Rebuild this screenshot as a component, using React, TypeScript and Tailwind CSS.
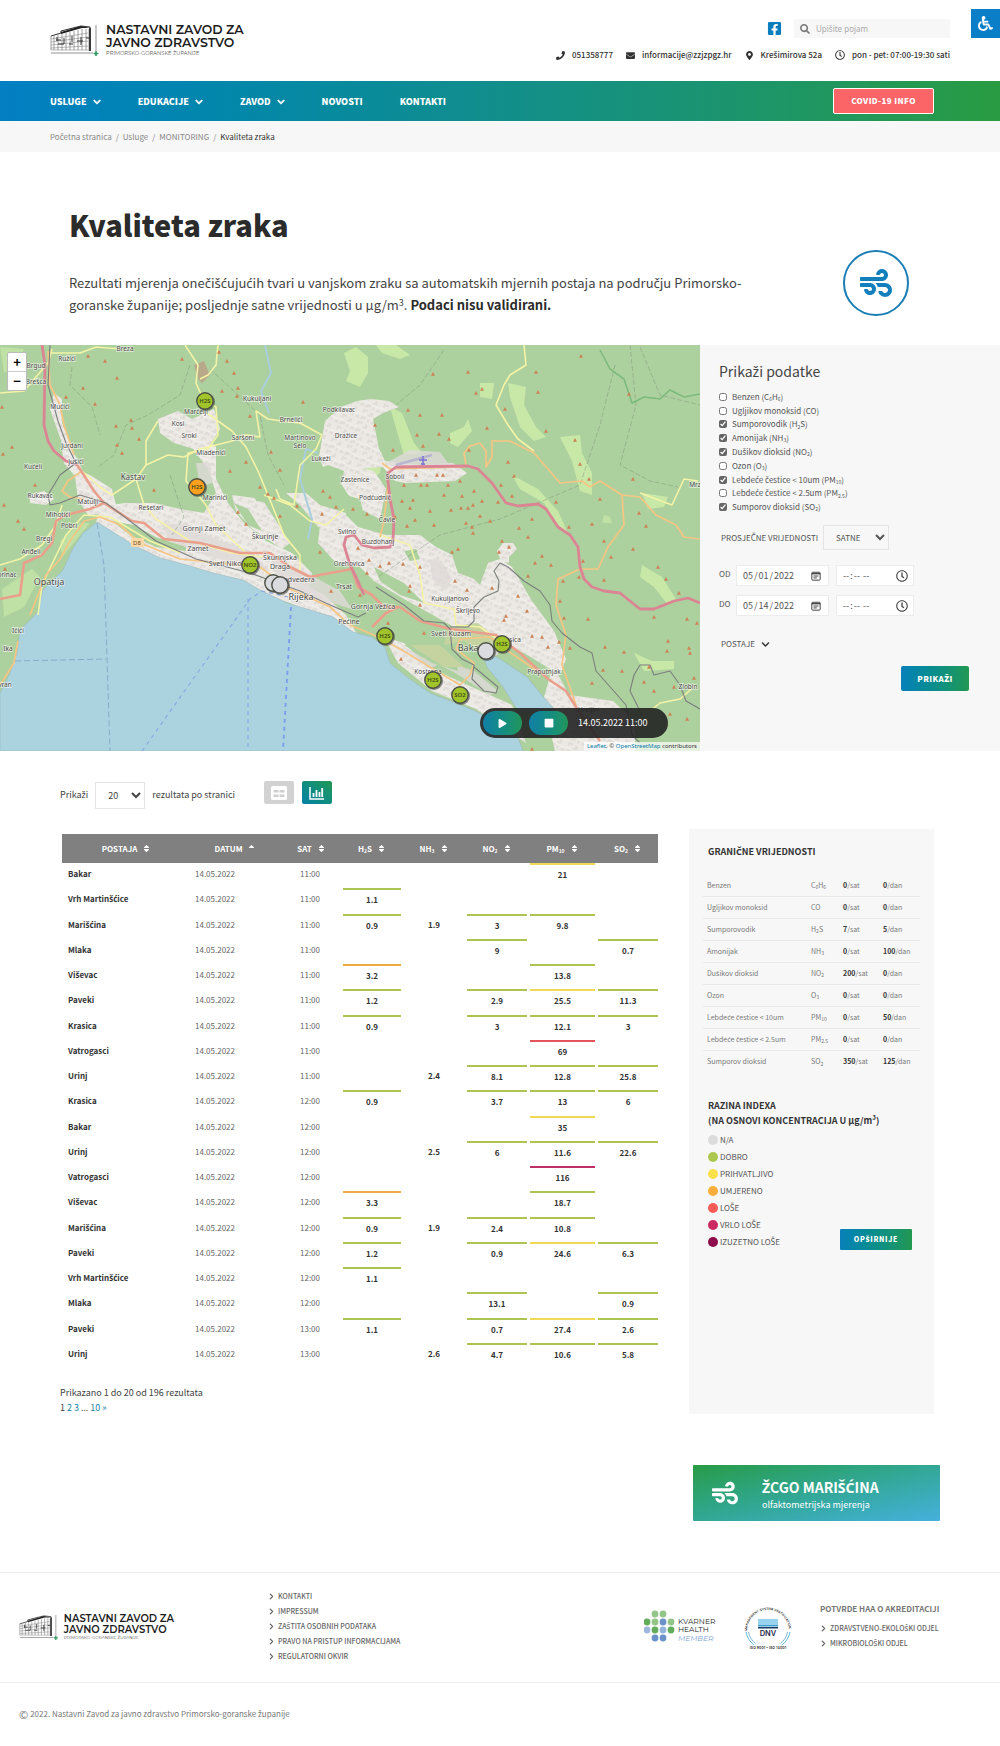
import { useState } from 'react';
import type { ReactNode } from 'react';
import { FaEnvelope, FaFacebookSquare, FaMapMarkerAlt, FaPhone, FaPlay, FaRegClock, FaSearch, FaSort, FaSortUp, FaStop, FaWheelchair, FaWind, FaChevronDown, FaChevronRight } from 'react-icons/fa';

type Level = 'good' | 'fair' | 'moderate' | 'poor' | 'veryPoor';
type Reading = [number, Level] | null;

interface Row {
  station: string;
  hour: string;
  h2s: Reading;
  nh3: number | null;
  no2: Reading;
  pm10: Reading;
  so2: Reading;
}

const levelBorder: Record<Level, string> = {
  good: 'border-[#adc452]',
  fair: 'border-[#f0d957]',
  moderate: 'border-[#f0ab44]',
  poor: 'border-[#e2555a]',
  veryPoor: 'border-[#c02e66]',
};

const g = (n: number): Reading => [n, 'good'];
const f = (n: number): Reading => [n, 'fair'];
const m = (n: number): Reading => [n, 'moderate'];

const rows: Row[] = [
  { station: 'Bakar', hour: '11:00', h2s: null, nh3: null, no2: null, pm10: f(21), so2: null },
  { station: 'Vrh Martinšćice', hour: '11:00', h2s: g(1.1), nh3: null, no2: null, pm10: null, so2: null },
  { station: 'Marišćina', hour: '11:00', h2s: g(0.9), nh3: 1.9, no2: g(3), pm10: g(9.8), so2: null },
  { station: 'Mlaka', hour: '11:00', h2s: null, nh3: null, no2: g(9), pm10: null, so2: g(0.7) },
  { station: 'Viševac', hour: '11:00', h2s: m(3.2), nh3: null, no2: null, pm10: g(13.8), so2: null },
  { station: 'Paveki', hour: '11:00', h2s: g(1.2), nh3: null, no2: g(2.9), pm10: f(25.5), so2: g(11.3) },
  { station: 'Krasica', hour: '11:00', h2s: g(0.9), nh3: null, no2: g(3), pm10: g(12.1), so2: g(3) },
  { station: 'Vatrogasci', hour: '11:00', h2s: null, nh3: null, no2: null, pm10: [69, 'poor'], so2: null },
  { station: 'Urinj', hour: '11:00', h2s: null, nh3: 2.4, no2: g(8.1), pm10: g(12.8), so2: g(25.8) },
  { station: 'Krasica', hour: '12:00', h2s: g(0.9), nh3: null, no2: g(3.7), pm10: g(13), so2: g(6) },
  { station: 'Bakar', hour: '12:00', h2s: null, nh3: null, no2: null, pm10: f(35), so2: null },
  { station: 'Urinj', hour: '12:00', h2s: null, nh3: 2.5, no2: g(6), pm10: g(11.6), so2: g(22.6) },
  { station: 'Vatrogasci', hour: '12:00', h2s: null, nh3: null, no2: null, pm10: [116, 'veryPoor'], so2: null },
  { station: 'Viševac', hour: '12:00', h2s: m(3.3), nh3: null, no2: null, pm10: g(18.7), so2: null },
  { station: 'Marišćina', hour: '12:00', h2s: g(0.9), nh3: 1.9, no2: g(2.4), pm10: g(10.8), so2: null },
  { station: 'Paveki', hour: '12:00', h2s: g(1.2), nh3: null, no2: g(0.9), pm10: f(24.6), so2: g(6.3) },
  { station: 'Vrh Martinšćice', hour: '12:00', h2s: g(1.1), nh3: null, no2: null, pm10: null, so2: null },
  { station: 'Mlaka', hour: '12:00', h2s: null, nh3: null, no2: g(13.1), pm10: null, so2: g(0.9) },
  { station: 'Paveki', hour: '13:00', h2s: g(1.1), nh3: null, no2: g(0.7), pm10: f(27.4), so2: g(2.6) },
  { station: 'Urinj', hour: '13:00', h2s: null, nh3: 2.6, no2: g(4.7), pm10: g(10.6), so2: g(5.8) },
];

// The main font has no Croatian letters, so those come from Noto Sans.
// Digits after "_" are drawn as subscript.
function Hr({ text }: { text: string }) {
  const parts = text.split(/(_[\d.]+|[čćšžđČĆŠŽĐ…]+)/);
  return (
    <span>
      {parts.map((p, i) => {
        if (i % 2 === 0) return p;
        if (p[0] === '_') return <sub key={i} className="text-[5px]">{p.slice(1)}</sub>;
        return <span key={i} className="font-['Noto_Sans',sans-serif]">{p}</span>;
      })}
    </span>
  );
}

const pollutants = [
  { name: 'Benzen', formula: 'C_6H_6', on: false, hour: 0, day: 0 },
  { name: 'Ugljikov monoksid', formula: 'CO', on: false, hour: 0, day: 0 },
  { name: 'Sumporovodik', formula: 'H_2S', on: true, hour: 7, day: 5 },
  { name: 'Amonijak', formula: 'NH_3', on: true, hour: 0, day: 100 },
  { name: 'Dušikov dioksid', formula: 'NO_2', on: true, hour: 200, day: 0 },
  { name: 'Ozon', formula: 'O_3', on: false, hour: 0, day: 0 },
  { name: 'Lebdeće čestice < 10um', formula: 'PM_10', on: true, hour: 0, day: 50 },
  { name: 'Lebdeće čestice < 2.5um', formula: 'PM_2.5', on: false, hour: 0, day: 0 },
  { name: 'Sumporov dioksid', formula: 'SO_2', on: true, hour: 350, day: 125 },
];

const indexLevels = [
  ['N/A', 'bg-[#dcdcdc]'],
  ['DOBRO', 'bg-[#adc84f]'],
  ['PRIHVATLJIVO', 'bg-[#fbe04a]'],
  ['UMJERENO', 'bg-[#f9ad3a]'],
  ['LOŠE', 'bg-[#f75b57]'],
  ['VRLO LOŠE', 'bg-[#cb2a63]'],
  ['IZUZETNO LOŠE', 'bg-[#8d0e4b]'],
];

function Logo({ className }: { className: string }) {
  return (
    <svg viewBox="0 0 196 33" className={className} role="img" aria-label="Nastavni zavod za javno zdravstvo">
      <path d="M1 12 L11 9 L11 7 L31 2 L40 3 L40 27" fill="none" stroke="#333" strokeWidth="1" />
      <path d="M11 8 L31 2 L40 4 L32 4 L11 10Z" fill="#222" />
      <path d="M1 12V26M4 11V26M8 10V26M12 10V26M16 9V26M20 8V26M24 7V26M28 6V26M32 5V26M36 5V26M39 5V26" stroke="#777" strokeWidth=".7" />
      <path d="M1 15L38 9M1 18L38 13M1 21L38 17M1 24L38 22M1 26H41" stroke="#888" strokeWidth=".6" />
      <path d="M6 16h5M8 20h6M14 14v6M22 12v6M27 17h6M31 13v8M19 20h4M36 14h3M7 13v4" stroke="#333" strokeWidth="1" />
      <path d="M40 4v23" stroke="#222" strokeWidth="1.6" />
      <path d="M46 1V27M1 29H43" stroke="#777" strokeWidth=".8" />
      <path d="M46 27v5M43.5 29.5h5" stroke="#2c9a5e" strokeWidth="1.6" />
      <text x="56" y="10" fontSize="12.5" fontWeight="600" fill="#1c1c1c" fontFamily="Montserrat, Inter, sans-serif">NASTAVNI ZAVOD ZA</text>
      <text x="56" y="23" fontSize="12.5" fontWeight="600" fill="#1c1c1c" fontFamily="Montserrat, Inter, sans-serif">JAVNO ZDRAVSTVO</text>
      <text x="56" y="31" fontSize="5.2" fill="#555" fontFamily="Montserrat, Inter, sans-serif">PRIMORSKO-GORANSKE ŽUPANIJE</text>
    </svg>
  );
}

const mapLabels: [number, number, string, number?][] = [
  [125, 6, 'Breza'], [67, 16, 'Ružići'], [36, 23, 'Brgud'], [36, 39, 'Brešca'], [60, 64, 'Mučići'], [72, 103, 'Jurdani'],
  [76, 119, 'Jušići'], [33, 124, 'Kućeli'], [133, 135, 'Kastav', 8], [40, 153, 'Rukavac'], [88, 159, 'Matulji'], [58, 172, 'Mihotići'],
  [69, 183, 'Pobri'], [44, 196, 'Bregi'], [31, 209, 'Anđeli'], [7, 232, 'orinac'], [49, 240, 'Opatija', 9], [18, 288, 'Ičići'],
  [8, 306, 'Ika'], [5, 342, 'vran'], [151, 165, 'Rešetari'], [196, 69, 'Marčelji'], [178, 81, 'Kosi'], [189, 93, 'Sroki'],
  [211, 110, 'Mladenići'], [243, 95, 'Saršoni'], [257, 56, 'Kukuljani'], [291, 77, 'Brnelići'], [300, 95, 'Martinovo'], [300, 103, 'Selo'],
  [339, 67, 'Podkilavac'], [346, 93, 'Dražice'], [321, 116, 'Lukeži'], [355, 137, 'Zastenice'], [215, 155, 'Marinići'],
  [204, 186, 'Gornji Zamet', 7], [265, 194, 'Škurinje', 7], [198, 206, 'Zamet', 7], [280, 215, 'Škurinjska', 7], [280, 224, 'Draga', 7],
  [228, 221, 'Sveti Nikola', 7], [297, 237, 'Podvedera', 7], [301, 255, 'Rijeka', 9], [344, 244, 'Trsat', 7], [349, 221, 'Orehovica'],
  [347, 189, 'Svilno'], [395, 134, 'Soboli'], [375, 155, 'Podčudnič'], [387, 177, 'Čavle'], [378, 199, 'Buzdohanj'],
  [373, 264, 'Gornja Vežica', 7], [349, 279, 'Pećine', 7], [450, 256, 'Kukuljanovo'], [468, 268, 'Škrljevo'], [451, 291, 'Sveti Kuzam', 7],
  [470, 306, 'Bakar', 9], [510, 297, 'Krasica'], [544, 329, 'Praputnjak'], [428, 329, 'Kostrena'], [688, 344, 'Zlobin'],
  [695, 142, 'Mrz'], [588, 367, 'Hreljin'],
];

// [x, y] of the mountain peak symbols
const peaks: [number, number][] = [
  [88, 11], [105, 16], [83, 43], [117, 33], [66, 52], [95, 59], [131, 75], [116, 81], [132, 83], [139, 94], [117, 100], [122, 108],
  [12, 102], [3, 109], [35, 140], [4, 160], [18, 176], [24, 184], [154, 145], [2, 62], [5, 224], [182, 14], [219, 7], [227, 16],
  [234, 28], [238, 43], [222, 46], [237, 51], [250, 71], [303, 57], [230, 126], [246, 117], [271, 107], [280, 125], [268, 149],
  [274, 153], [260, 142], [238, 167], [246, 179], [280, 171], [297, 161], [323, 146], [330, 152], [336, 162], [322, 169], [320, 207],
  [353, 164], [367, 169], [375, 80], [408, 65], [420, 70], [442, 70], [417, 90], [439, 89], [449, 94], [423, 101], [393, 105],
  [469, 105], [433, 29], [468, 27], [476, 48], [482, 44], [536, 27], [538, 47], [581, 11], [505, 64], [487, 83], [546, 86],
  [575, 95], [629, 49], [508, 117], [580, 119], [589, 134], [633, 134], [514, 131], [501, 140], [512, 151], [498, 157], [556, 157],
  [600, 154], [639, 168], [646, 181], [569, 182], [592, 179], [604, 196], [611, 212], [633, 204], [658, 222], [583, 216], [666, 234],
  [679, 248], [604, 235], [579, 232], [563, 236], [528, 231], [551, 220], [542, 211], [535, 218], [509, 202], [499, 207], [502, 196],
  [519, 183], [528, 192], [532, 174], [480, 171], [490, 176], [466, 178], [473, 188], [472, 182], [434, 180], [415, 175], [407, 181],
  [410, 163], [430, 166], [444, 150], [462, 151], [474, 146], [461, 163], [468, 163], [473, 160], [482, 156], [451, 165], [404, 140],
  [416, 130], [421, 140], [427, 140], [437, 130], [448, 140], [460, 136], [443, 130], [413, 155], [402, 156], [395, 172], [452, 207],
  [458, 204], [455, 236], [467, 245], [492, 243], [506, 271], [504, 275], [518, 251], [527, 266], [560, 256], [564, 273], [588, 274],
  [542, 292], [532, 291], [548, 302], [559, 297], [570, 303], [605, 302], [624, 307], [622, 326], [603, 325], [592, 338], [649, 322],
  [668, 296], [667, 306], [689, 303], [690, 308], [654, 272], [687, 274], [697, 278], [644, 337], [654, 346], [670, 369], [687, 374],
  [694, 333], [674, 342], [410, 241], [420, 260], [409, 246], [389, 218], [380, 221], [403, 219], [420, 222], [369, 215], [358, 203],
  [360, 250], [401, 314], [424, 288], [388, 278], [367, 228], [331, 246], [532, 404],
];

const markers: [number, number, string, string][] = [
  [205, 56, 'H2S', '#a2c42b'], [197, 142, 'H2S', '#fb9f1c'], [250, 220, 'NO2', '#a2c42b'], [273, 238, '', '#d9dbdf'],
  [280, 240, '', '#d9dbdf'], [385, 291, 'H2S', '#a2c42b'], [502, 299, 'H2S', '#a2c42b'], [486, 306, '', '#d9dbdf'],
  [433, 335, 'H2S', '#a2c42b'], [460, 350, 'SO2', '#a2c42b'],
];

// Outlines of the settlements, filled once plain and once with the house pattern
const builtUp = [
  'M158 74l20-8 14 8 22-10 6 20-10 16-16 4-20-6-14-10zM190 100l16-6 10 8 0 32 12 24 16 20 22 18 26 12 20 20-6 30-40-16-32-22-24-16-36-6-30-16-24-10-18-10 22-4 30 0 26 6 24 4 12-20-8-24zM325 76l16-14 16-6 14-2 18 2 10 6-16 6-10 6 6 30 6 12 36 4 32-2 14 10-12 8-50 2-10-2-12-14-32 2-24 8-8-20z',
  'M320 180l24-12 14 14 28 8 22 0 18 8 22 26 26 10 24 24 24 6-4 30-60-10-54-30-30-18-14-14-24-4-18-20zM400 190l20 0 16 12 16 8 6 18 8 10-8 16-36-8-22-30zM480 240l8-22 12-4 12 8 20 34 22 30 12 28 -6 16-36-22-30-14-8-24zM497 206l6-8 10 0 4 6-8 8 0 6-8-2z',
  'M100 164l44 6 30 22 60 16 40 14 50 28 22 20 14 24-30-16-40-20-26-8-60-22-50-14-30-14-30-16zM384 292l20 6 24 24 44 20 40 18 14 38-50-34-44-18-34-28zM553 320l16 30 44 6 22 20 0 30-80 0-12-50zM54 48l8 6 0 24 12 30-10-4-14-40zM62 104l12 4 8 16-8 6-10-12zM30 150l14-4 10 8-8 6-16-2z',
  'M286 148l20 0 14 12 26 8 0 10-28 4-18-22zM232 150l30 4 28 44-8 6-30-20-16-18zM74 124l16 6 22 14 6 24-30 2-10-16zM330 130l28-8 16 4 12 18-6 30-24-12-14-22z',
];

function StationMap() {
  return (
    <svg viewBox="0 0 700 406" preserveAspectRatio="xMidYMid slice" className="block h-full w-full" role="img" aria-label="Karta mjernih postaja">
      <defs>
        <pattern id="houses" width="17" height="13" patternUnits="userSpaceOnUse" patternTransform="rotate(24)">
          <path d="M1 1h5v2h-3v2h-2zM9 2h3v4h-2v1h-3v-2h2zM14 9h3v3h-4zM3 8h4v3h-3v1h-3zM9 9h2v3h-2z" fill="#d2cecb" />
          <path d="M0 7h8l4 1h5" fill="none" stroke="#ffffff" strokeWidth=".8" />
        </pattern>
      </defs>
      <rect width="700" height="406" fill="#add19e" />
      {/* meadows */}
      <g fill="#c8e8a8">
        <path d="M344 8l12-6 12 10 0 16-8 14-14-6 4-10zM352 108l18-8 12 8-2 20-8 6-18-4-4-12zM390 62l12 6 12 30 8 10-18 2-6-20zM508 38l18 4-2 18 12 22 10 10-12 4-14-14-10-30zM450 88l14-6 4-8 4 12-14 16-8-4zM560 92l20-2 2 18 10 20 0 22-12 -4-8-30zM512 130l26 14 20 22 10 22-10-6-14-24-24-14zM642 220l20 12 14 22-8 6-14-18-14-10zM480 38l14 0-2 16-12-2zM642 148l26 4-4 10-16 2zM634 308l18 8 22 0 0 8-30 2zM376 0l20 0 14 10-10 4-18-6z" />
        <path d="M0 2l24 2-6 16-14 8zM2 244l30-20 8 8-16 30-20 10zM60 196l20-18 10 0-28 34zM604 170l6 2 2 6-10 0z" opacity=".7" />
      </g>
      {/* built-up land */}
      {builtUp.map((d) => (
        <g key={d}>
          <path d={d} fill="#ece9e4" />
          <path d={d} fill="url(#houses)" opacity=".45" />
        </g>
      ))}
      <g fill="#dedad8">
        <path d="M160 178l30 2 20 12 40 14 20 20-60-14-40-16zM196 118l14 0 2 20-12 4zM270 210l30 14 40 22 12 18-40-12-36-22zM430 214l12 2 10 18-6 12-14-12zM410 105l30 2 10 14-60 0-2-4zM398 298l24 14 30 14 38 24 8-4-24-20-30-10 -14 8-20-16zM484 302l14 2 0 6-12 2z" opacity=".8" />
      </g>
      <g fill="#add19e">
        <path d="M234 158l14 6 14 22-14-6zM250 140l14 6 6 12-14-2zM304 130l24-10 16 6-2 12-24 4zM374 222l30 16 20 20-24-8-20-14zM404 300l22 0 30 14 2 12-26-8zM404 206l12-2 4 10-10 2zM380 266l26 10 26 18-20-4-26-16zM346 150l14 4 4 16-12-2zM112 176l22 4 22 12 30 10 0 4-30-4-26-12zM270 154l20 10 10 26-14-10z" />
      </g>
      <path d="M448 282l30-4 18 16-8 16-24-14-20 4zM410 300l30 0 24 22-20 0z" fill="#c5d3a0" />
      {/* sea */}
      <path d="M0 348L10 328L17 308L20 285L37 268L43 245L63 225L72 205L83 188L97 177L110 185L133 200L160 213L187 220L213 228L243 235L260 245L287 258L310 265L333 272L353 287L372 292L385 302L390 318L407 332L430 348L473 365L500 378L517 390L523 406H0Z" fill="#aad3df" stroke="#9db7bd" strokeWidth=".6" />
      <path d="M483 310L497 312L527 332L540 348L556 366L518 366L503 342L487 322Z" fill="#aad3df" stroke="#9db7bd" strokeWidth=".6" />
      <path d="M265 0l6 28-10 18 8 22M306 104l-6 30 12 40-4 20M318 108l-12-4" fill="none" stroke="#a9cedd" strokeWidth="2" />
      <path d="M194 20l10-4 6 14-8 8-4-4z" fill="#b8a98a" />
      {/* borders and paths */}
      <g fill="none" stroke="#879a80" strokeWidth=".7" strokeDasharray="5 2" opacity=".8">
        <path d="M190 20L180 50L148 70L126 80L114 110L98 122M72 22L70 40L92 62L100 90M170 130L184 172L172 190M210 24L260 70L268 110L284 140M444 5L420 40L396 60M615 20L600 80L580 140L500 174L440 190L378 232M630 0L636 60L620 120L650 136L678 142M640 2L660 50L700 60" />
      </g>
      <path d="M600 5L610 24L624 34L632 58L644 52L660 54L670 45L684 52L700 49" fill="none" stroke="#7cba7c" strokeWidth="1.6" />
      {/* minor roads */}
      <g fill="none" stroke="#f4f3a6" strokeWidth="1.6" strokeLinejoin="round">
        <path d="M0 48L24 46L48 18L52 4M50 8L80 8L96 2L120 4M185 0L198 20L196 38L204 56L216 62L218 90L208 104L188 108L186 136L206 160L216 180L244 206L252 214M218 0L216 20L208 30L200 34M204 66L232 86L246 102L258 126L268 150L284 190L300 210L300 228" />
        <path d="M158 76L146 96L146 120L136 134L112 150L100 142L82 126M146 120L168 110L184 112L200 104L232 96L246 90L260 92L256 66L268 74L282 76L300 78L322 90L316 104L300 120L294 160L280 154L276 144M264 150L290 160L310 176L326 180L344 164M136 134L144 160L156 174L190 196L232 208L262 212M524 0L526 20L510 30L504 40L496 60L508 80L518 94L534 106M380 190L410 200L420 230L424 258L454 264L456 280L480 282L500 296" />
        <path d="M640 148L656 154L672 160L684 134L698 136M650 366L660 358L680 354L696 340M0 220L20 214L42 200L56 180L62 160M38 270L42 240L66 190L84 170L110 172L150 196L180 208" />
      </g>
      {/* main roads */}
      <g fill="none" stroke="#f6c583" strokeWidth="1.7" strokeLinejoin="round">
        <path d="M48 6L50 40L60 60L64 80L74 110M82 126L68 136L62 146L70 152L84 154M0 340L14 318L18 296M30 270L46 230L60 214L70 196L84 176L100 172L120 180L140 198L180 214L220 218L260 222L290 244L330 262L350 280L374 290L400 304L430 322L460 340L470 330L474 318L456 304L460 294L490 292L508 306L540 328" />
        <path d="M466 120L464 108L470 101L480 98L486 106L486 122L492 112L492 96L510 96L534 108L548 124L560 138L582 136L590 142L600 136L622 150L640 152L656 170L676 180L684 192L700 194M622 150L624 180L608 202L598 224L580 224M580 224L558 234L556 260L566 290L562 320L576 360M382 118L390 124L466 122M388 140L384 176L380 192" />
      </g>
      <g fill="none" stroke="#e99f8b" strokeWidth="2.6" strokeLinejoin="round">
        <path d="M76 118L94 146L104 158L132 176L144 178L164 194L200 198L240 208L270 208L290 222L310 232L330 228L352 224L358 242L372 250L384 262L400 262L420 276L450 284L466 286L496 290L520 308L548 334L566 346L576 362L600 396M104 158L90 164L66 170L56 176L52 198L42 210L24 218L20 250L0 254M372 282L386 268L398 262" />
      </g>
      {/* motorway */}
      <g fill="none" stroke="#da8494" strokeWidth="2.8" strokeLinejoin="round">
        <path d="M42 0L45 20L44 80L48 96L54 106L66 116L78 120M364 250L356 232L350 220L344 200L346 192L354 190L362 200L374 203L390 202L393 196L394 174L390 154L388 136L388 128L396 122L468 121L478 124L492 138L506 158L518 161L538 159L546 164L558 182L570 190L578 202L580 222L584 234L592 242L604 246L620 248L630 256L640 264L654 264L674 256L688 253L700 258" />
      </g>
      {/* railway */}
      <g fill="none" stroke="#7b7e7e" strokeWidth="1.1" strokeLinejoin="round">
        <path d="M50 0L48 40L58 76L66 98L76 118L60 130L48 150L50 160L60 158L80 150L106 158L130 176L156 196L196 214L250 228L300 246L330 260L358 272L366 268M376 242L404 260L424 276L444 278L450 284L452 304L462 314L474 320L472 334L484 346L496 348L498 342L474 322M450 282L468 282L474 276L474 262L484 252L498 246L499 236L494 226L500 218L508 222L524 236L540 246L550 260L552 276L562 288L580 302L592 308L596 326L612 344L626 360L632 390L640 398M642 370L630 346L634 330L640 320L650 320L654 330L670 326L680 340L686 356L700 364" />
      </g>
      {/* administrative and ferry lines */}
      <g fill="none" stroke="#83a7c4" strokeWidth=".9" strokeDasharray="6 3">
        <path d="M97 178L104 220L110 406M15 316L106 314" />
      </g>
      <g fill="none" stroke="#8aa6e4" strokeWidth="1.1" strokeDasharray="4 4">
        <path d="M142 406L250 254L262 246L288 252M248 254L248 406" />
        <path d="M291 262L283 406" stroke="#7a9df0" strokeWidth="1.8" />
      </g>
      <path d="M396 120L432 110" stroke="#b8b6cf" strokeWidth="2.5" />
      <path d="M423 111v9M419 115h8M421 119h4" stroke="#7a6fd6" strokeWidth="1.4" />
      <g fill="#cd8355">
        {peaks.map(([x, y]) => (
          <path key={`${x}-${y}`} d={`M${x} ${y - 2}l2 3.700h-4z`} />
        ))}
      </g>
      <rect x="131" y="193" width="13" height="9" rx="1" fill="#fbd9a6" />
      <text x="137" y="200" fontSize="6" textAnchor="middle" fill="#6d4a1e" fontFamily="Noto Sans, sans-serif">D8</text>
      <g fill="#4a4845" stroke="#ffffff" strokeOpacity=".6" strokeWidth="1.4" paintOrder="stroke" fontFamily="Noto Sans, sans-serif" textAnchor="middle">
        {mapLabels.map(([x, y, name, size]) => (
          <text key={name} x={x} y={y} fontSize={size ?? 6.5}>{name}</text>
        ))}
      </g>
      {markers.map(([x, y, label, fill]) => (
        <g key={`${x}-${y}`}>
          <circle cx={x + 1} cy={y + 1} r="9" fill="#444" opacity=".6" />
          <circle cx={x} cy={y} r="8.2" fill={fill} stroke="#4a4f45" strokeWidth="1.4" />
          <text x={x} y={y + 2} fontSize="6" fontWeight="600" textAnchor="middle" fill="#3c4a14" fontFamily="Noto Sans, sans-serif">{label}</text>
        </g>
      ))}
    </svg>
  );
}

function CalendarIcon() {
  return (
    <svg viewBox="0 0 12 12" className="size-[10px] shrink-0" fill="none" stroke="#444" strokeWidth="1.2">
      <rect x="1" y="1.5" width="10" height="9.5" rx="1" />
      <path d="M1 3.2h10" strokeWidth="1.6" />
      <path d="M3 6h6M3 8.3h4" />
    </svg>
  );
}

function DateTimeRow({ label, id, date }: { label: string; id: string; date: string }) {
  return (
    <div className="flex items-center gap-[7px]">
      <label htmlFor={`${id}-date`} className="w-[10px] pb-1 text-[8px]">{label}</label>
      <div className="flex h-[21px] w-[93px] items-center justify-between border border-[#ececec] bg-white pr-[7px] pl-[5px]">
        <input id={`${id}-date`} type="date" defaultValue={date} className="w-[66px] text-[9px] outline-none [&::-webkit-calendar-picker-indicator]:hidden" />
        <CalendarIcon />
      </div>
      <div className="flex h-[21px] w-[78px] items-center justify-between border border-[#ececec] bg-white pr-[5px] pl-[5px]">
        <input type="time" aria-label={`${label} vrijeme`} className="w-[50px] text-[9px] outline-none [&::-webkit-calendar-picker-indicator]:hidden" />
        <FaRegClock size={12} color="#444" />
      </div>
    </div>
  );
}

function Header() {
  return (
    <header className="relative flex h-[81px] items-start justify-between pr-[50px] pl-[50px]">
      <Logo className="mt-[24px] h-[33px] w-[196px]" />
      <div className="flex flex-col items-end pt-[19px]">
        <div className="flex items-center gap-[12px]">
          <a href="#facebook" aria-label="Facebook"><FaFacebookSquare size={15} color="#0a7dbd" /></a>
          <label className="flex h-[19px] w-[156px] items-center gap-[6px] bg-[#f7f7f7] px-[6px]">
            <FaSearch size={10} color="#777" className="shrink-0" />
            <input aria-label="Upišite pojam" placeholder="Upišite pojam" className="w-full font-['Noto_Sans',sans-serif] text-[8px] outline-none placeholder:text-[#aaa]" />
          </label>
        </div>
        <div className="mt-[9px] flex items-center gap-[13px] text-[8px] leading-4 font-medium text-[#333]">
          <span className="flex items-center gap-[7px]"><FaPhone size={9} />051358777</span>
          <span className="flex items-center gap-[7px]"><FaEnvelope size={9} />informacije@zzjzpgz.hr</span>
          <span className="flex items-center gap-[7px]"><FaMapMarkerAlt size={9} /><Hr text="Krešimirova 52a" /></span>
          <span className="flex items-center gap-[7px]"><FaRegClock size={10} />pon - pet: 07:00-19:30 sati</span>
        </div>
      </div>
      <button aria-label="Pristupačnost" className="absolute top-[9px] right-0 flex h-[29px] w-[29px] items-center justify-center bg-[#0a7fc8] text-white">
        <FaWheelchair size={15} />
      </button>
    </header>
  );
}

function Nav() {
  const items: [string, boolean][] = [['USLUGE', true], ['EDUKACIJE', true], ['ZAVOD', true], ['NOVOSTI', false], ['KONTAKTI', false]];
  return (
    <nav className="flex h-[40px] items-center justify-between bg-linear-to-r from-[#037fc3] via-[#128e8b] to-[#299b41] pr-[66px] pl-[50px]">
      <ul className="flex gap-[37px] pt-[2px] text-[9px] font-black text-white">
        {items.map(([name, sub]) => (
          <li key={name}>
            <a href={`#${name.toLowerCase()}`} className="flex items-center gap-[6px]">
              {name}
              {sub && <FaChevronDown size={8} stroke="currentColor" strokeWidth={40} />}
            </a>
          </li>
        ))}
      </ul>
      <a href="#covid" className="flex h-[26px] w-[101px] items-center justify-center rounded-xs border border-white bg-[#fb6568] text-[8px] font-black tracking-wider text-white">COVID-19 INFO</a>
    </nav>
  );
}

function FilterPanel() {
  return (
    <form className="w-[300px] bg-[#f7f7f7] pt-[16px] pr-[31px] pl-[19px] text-[8px] text-[#555]" onSubmit={(e) => e.preventDefault()}>
      <h2 className="text-[14px] leading-5 text-[#444]"><Hr text="Prikaži podatke" /></h2>
      <div className="mt-[8px] grid h-[124px] auto-rows-fr">
        {pollutants.map((p) => (
          <label key={p.name} className="flex items-center gap-[5px] leading-3">
            <input type="checkbox" defaultChecked={p.on} className="size-[8px] accent-[#666]" />
            <Hr text={`${p.name} (${p.formula})`} />
          </label>
        ))}
      </div>
      <div className="mt-[11px] flex items-center gap-[5px] pl-[2px]">
        <label htmlFor="average"><Hr text="PROSJEČNE VRIJEDNOSTI" /></label>
        <select id="average" className="h-[25px] w-[66px] border border-[#e4e4e4] bg-[#f7f7f7] pl-[8px] text-[8px]">
          <option>SATNE</option>
          <option>DNEVNE</option>
        </select>
      </div>
      <div className="mt-[15px] flex flex-col gap-[9px]">
        <DateTimeRow label="OD" id="od" date="2022-05-01" />
        <DateTimeRow label="DO" id="do" date="2022-05-14" />
      </div>
      <button type="button" className="mt-[20px] flex items-center gap-[6px] pl-[2px] leading-4">
        POSTAJE <FaChevronDown size={9} color="#333" />
      </button>
      <div className="mt-[14px] flex justify-end">
        <button className="h-[25px] w-[68px] rounded-xs bg-linear-to-r from-[#0a80b9] to-[#229851] text-[8px] font-black tracking-wider text-white"><Hr text="PRIKAŽI" /></button>
      </div>
    </form>
  );
}

function MapSection() {
  const [playing, setPlaying] = useState(false);
  return (
    <section className="flex">
      <div className="relative h-[406px] min-w-0 flex-1 overflow-hidden">
        <StationMap />
        <div className="absolute top-[7px] left-[7px] flex w-[20px] flex-col rounded-xs border border-[#bbb] bg-white text-[13px] leading-[18px] font-bold text-black">
          <button aria-label="Približi" className="h-[19px] border-b border-[#ccc]">+</button>
          <button aria-label="Udalji" className="h-[18px]">−</button>
        </div>
        <div className="absolute right-[32px] bottom-[13px] flex h-[30px] w-[188px] items-center gap-[7px] rounded-full bg-[#222]/90 px-[3px] text-white">
          <button aria-label="Pokreni" onClick={() => setPlaying(true)} className="flex h-[24px] w-[39px] items-center justify-center rounded-full bg-linear-to-r from-[#127fa6] to-[#22965a]">
            <FaPlay size={9} opacity={playing ? 0.6 : 1} />
          </button>
          <button aria-label="Zaustavi" onClick={() => setPlaying(false)} className="flex h-[24px] w-[39px] items-center justify-center rounded-full bg-linear-to-r from-[#127fa6] to-[#22965a]">
            <FaStop size={10} />
          </button>
          <span className="pl-[3px] text-[9px]">14.05.2022 11:00</span>
        </div>
        <p className="absolute right-0 bottom-0 bg-white/70 px-[3px] font-['Noto_Sans',sans-serif] text-[6px] leading-[9px] text-[#333]">
          <a href="#leaflet" className="text-[#0b7dab]">Leaflet</a>, © <a href="#osm" className="text-[#0b7dab]">OpenStreetMap</a> contributors
        </p>
      </div>
      <FilterPanel />
    </section>
  );
}

function SortHead({ children, up }: { children: ReactNode; up?: boolean }) {
  return (
    <th className="p-0 pl-[3px] font-bold">
      <button className="mx-auto flex items-center gap-[5px]">
        {children}
        {up ? <FaSortUp size={9} /> : <FaSort size={9} />}
      </button>
    </th>
  );
}

function Cell({ value }: { value: Reading }) {
  if (!value) return <td />;
  return (
    <td className="p-0 pl-[3px] align-top">
      <div className={`border-t-2 pt-[4px] text-center font-bold ${levelBorder[value[1]]}`}>{value[0]}</div>
    </td>
  );
}

function ResultsTable() {
  return (
    <table className="mt-[25px] ml-[2px] h-[534px] w-[596px] table-fixed text-[8px] leading-3 text-[#333]">
      <colgroup>
        <col className="w-[126px]" />
        <col className="w-[92px]" />
        <col className="w-[60px]" />
        <col className="w-[61px]" />
        <col className="w-[63px]" />
        <col className="w-[63px]" />
        <col className="w-[68px]" />
        <col className="w-[63px]" />
      </colgroup>
      <thead>
        <tr className="h-[29px] bg-[#808080] text-white">
          <SortHead>POSTAJA</SortHead>
          <SortHead up>DATUM</SortHead>
          <SortHead>SAT</SortHead>
          <SortHead><Hr text="H_2S" /></SortHead>
          <SortHead><Hr text="NH_3" /></SortHead>
          <SortHead><Hr text="NO_2" /></SortHead>
          <SortHead><Hr text="PM_10" /></SortHead>
          <SortHead><Hr text="SO_2" /></SortHead>
        </tr>
      </thead>
      <tbody>
        {rows.map((r, i) => (
          <tr key={i}>
            <td className="p-0 pb-[3px] pl-[6px] font-bold"><Hr text={r.station} /></td>
            <td className="p-0 pb-[3px] pl-[7px] text-[#666]">14.05.2022</td>
            <td className="p-0 pb-[3px] text-center text-[#666]">{r.hour}</td>
            <Cell value={r.h2s} />
            <td className="p-0 pb-[3px] pl-[3px] text-center font-bold">{r.nh3}</td>
            <Cell value={r.no2} />
            <Cell value={r.pm10} />
            <Cell value={r.so2} />
          </tr>
        ))}
      </tbody>
    </table>
  );
}

function LimitsPanel() {
  return (
    <aside className="h-[585px] bg-[#f7f7f7] px-[14px] pt-[15px] text-[#444]">
      <h3 className="pl-[5px] text-[9px] leading-4 font-bold text-[#333]"><Hr text="GRANIČNE VRIJEDNOSTI" /></h3>
      <table className="mt-[14px] w-full table-fixed text-[7px] leading-3 text-[#777]">
        <colgroup>
          <col className="w-[104px]" />
          <col className="w-[32px]" />
          <col className="w-[40px]" />
          <col />
        </colgroup>
        <tbody>
          {pollutants.map((p) => (
            <tr key={p.name} className="h-[22px] border-b border-[#e9e9e9] last:border-0">
              <td className="pl-[4px]"><Hr text={p.name} /></td>
              <td className="pl-[4px]"><Hr text={p.formula} /></td>
              <td className="pl-[4px]"><b className="text-[#333]">{p.hour}</b>/sat</td>
              <td className="pl-[4px]"><b className="text-[#333]">{p.day}</b>/dan</td>
            </tr>
          ))}
        </tbody>
      </table>
      <h3 className="mt-[26px] pl-[5px] text-[9px] leading-[15px] font-bold text-[#333]">
        RAZINA INDEXA<br />(NA OSNOVI KONCENTRACIJA U µg/m³)
      </h3>
      <div className="mt-[3px] flex items-end justify-between pr-[8px] pl-[5px]">
        <ul className="text-[8px] leading-[17px] text-[#555]">
          {indexLevels.map(([name, color]) => (
            <li key={name} className="flex h-[17px] items-center gap-[2px]">
              <span className={`size-[10px] rounded-full ${color}`} />
              <Hr text={name} />
            </li>
          ))}
        </ul>
        <button className="h-[21px] w-[72px] rounded-[1px] bg-linear-to-r from-[#0a80b9] to-[#229851] text-[7px] font-black tracking-widest text-white"><Hr text="OPŠIRNIJE" /></button>
      </div>
    </aside>
  );
}

function FooterLinks({ items }: { items: string[] }) {
  return (
    <ul className="text-[7px] font-medium text-[#666]">
      {items.map((name) => (
        <li key={name} className="h-[15px]">
          <a href="#" className="flex items-center gap-[3px] leading-[15px]"><FaChevronRight size={7} /><Hr text={name} /></a>
        </li>
      ))}
    </ul>
  );
}

const kvarnerDots: [number, number, string][] = [
  [11, 4, '#93c488'], [19, 4, '#93c488'], [3, 12, '#62ac5c'], [11, 12, '#93c488'], [19, 12, '#6b93c9'], [27, 12, '#93c488'],
  [3, 20, '#9db8dc'], [11, 20, '#62ac5c'], [19, 20, '#93b4dc'], [27, 20, '#62ac5c'], [11, 28, '#6b93c9'], [19, 28, '#6b93c9'],
];

function Footer() {
  return (
    <footer className="border-t border-[#eeeeee]">
      <div className="flex h-[110px] border-b border-[#eeeeee] pl-[19px]">
        <div className="w-[249px] pt-[41px]"><Logo className="h-[27px] w-[157px]" /></div>
        <div className="w-[376px] pt-[16px]">
          <FooterLinks items={['KONTAKTI', 'IMPRESSUM', 'ZAŠTITA OSOBNIH PODATAKA', 'PRAVO NA PRISTUP INFORMACIJAMA', 'REGULATORNI OKVIR']} />
        </div>
        <svg viewBox="0 0 74 32" className="mt-[37px] h-[32px] w-[74px]" role="img" aria-label="Kvarner Health Member" fontFamily="Montserrat, Inter, sans-serif">
          {kvarnerDots.map(([x, y, c]) => <circle key={`${x}-${y}`} cx={x} cy={y} r="3.4" fill={c} />)}
          <text x="34" y="14" fontSize="7.5" fill="#222">KVARNER</text>
          <text x="34" y="22" fontSize="7.5" fill="#222">HEALTH</text>
          <text x="34" y="31" fontSize="7.5" fontStyle="italic" fill="#7ba4d4">MEMBER</text>
        </svg>
        <svg viewBox="0 0 48 46" className="mt-[31px] ml-[26px] h-[46px] w-[48px]" role="img" aria-label="DNV" fontFamily="Inter, sans-serif">
          <path id="dnv-arc" d="M3 27A21 21 0 0 1 45 27" fill="none" />
          <text fontSize="3.2" fontWeight="600" fill="#333"><textPath href="#dnv-arc">MANAGEMENT SYSTEM CERTIFICATION</textPath></text>
          <path d="M2 28A22 22 0 0 0 10 41M46 28A22 22 0 0 1 38 41" fill="none" stroke="#5db8e0" strokeWidth="1" />
          <path d="M4.500 28A19 19 0 0 0 11.500 39.500M43.500 28A19 19 0 0 1 36.500 39.500" fill="none" stroke="#7fb5d2" strokeWidth="1" />
          <rect x="14" y="15" width="20" height="5" fill="#97d3ef" />
          <rect x="14" y="20.500" width="20" height="2" fill="#3fa0d0" />
          <rect x="14" y="23" width="20" height="1.500" fill="#173b66" />
          <text x="24" y="32" fontSize="7.500" fontWeight="600" textAnchor="middle" fill="#1a2b4a">DNV</text>
          <text x="24" y="45" fontSize="3.6" fontWeight="600" textAnchor="middle" fill="#333">ISO 9001 • ISO 14001</text>
        </svg>
        <div className="pt-[28px] pl-[28px]">
          <h4 className="mb-[4px] text-[8px] leading-4 font-bold text-[#777]">POTVRDE HAA O AKREDITACIJI</h4>
          <FooterLinks items={['ZDRAVSTVENO-EKOLOŠKI ODJEL', 'MIKROBIOLOŠKI ODJEL']} />
        </div>
      </div>
      <p className="flex items-center gap-[2px] pt-[23px] pb-[24px] pl-[19px] text-[8px] leading-4 text-[#777]">
        <span className="text-[11px]">©</span>
        <Hr text="2022. Nastavni Zavod za javno zdravstvo Primorsko-goranske županije" />
      </p>
    </footer>
  );
}

export default function App() {
  return (
    <div className="bg-white font-['Noto_Sans_CJK_SC','Noto_Sans',sans-serif] text-[#444]">
      <Header />
      <Nav />
      <div className="flex h-[31px] items-center gap-[4px] bg-[#f7f7f7] pl-[50px] text-[8px] text-[#888]">
        <a href="#pocetna"><Hr text="Početna stranica" /></a>
        <span>/</span>
        <a href="#usluge">Usluge</a>
        <span>/</span>
        <a href="#monitoring">MONITORING</a>
        <span>/</span>
        <span className="text-[#333]">Kvaliteta zraka</span>
      </div>

      <section className="flex h-[193px] justify-between pr-[91px] pl-[69px]">
        <div className="w-[710px] pt-[52px]">
          <h1 className="text-[29px] leading-10 font-black text-[#2b2b2b]">Kvaliteta zraka</h1>
          <p className="mt-[28px] text-[13px] leading-[22px]">
            <Hr text="Rezultati mjerenja onečišćujućih tvari u vanjskom zraku sa automatskih mjernih postaja na području Primorsko-goranske županije; posljednje satne vrijednosti u µg/m" /><sup className="text-[9px]">3</sup>. <b className="text-[#2b2b2b]">Podaci nisu validirani.</b>
          </p>
        </div>
        <div className="mt-[98px] flex size-[66px] items-center justify-center rounded-full border-2 border-[#1b7fb5] text-[#1380bd]">
          <FaWind size={32} />
        </div>
      </section>

      <MapSection />

      <main className="flex pr-[60px] pl-[60px]">
        <div className="min-w-0 flex-1 pt-[30px]">
          <div className="flex items-center text-[9px]">
            <label htmlFor="per-page"><Hr text="Prikaži" /></label>
            <select id="per-page" className="mx-[7px] h-[27px] w-[50px] border border-[#e4e4e4] bg-white pl-[8px] text-[9px]">
              <option>20</option>
              <option>50</option>
            </select>
            <span>rezultata po stranici</span>
            <button aria-label="Tablica" className="mb-[5px] ml-[29px] flex h-[23px] w-[30px] items-center justify-center rounded-xs bg-[#d2d2d2]">
              <svg viewBox="0 0 16 14" className="h-[14px] w-[16px]">
                <rect width="16" height="14" rx="1.500" fill="#fff" />
                <path d="M2.500 4h5v2.500h-5zM8.500 4h5v2.500h-5zM2.500 8.500h5V11h-5zM8.500 8.500h5V11h-5z" fill="#cfcfcf" />
              </svg>
            </button>
            <button aria-label="Grafikon" className="mb-[5px] ml-[8px] flex h-[23px] w-[30px] items-center justify-center rounded-xs bg-linear-to-tr from-[#0a80a5] to-[#229851]">
              <svg viewBox="0 0 16 14" className="h-[14px] w-[16px]" fill="none" stroke="#fff">
                <path d="M1 1v12h14" strokeWidth="1.500" />
                <path d="M4.500 7v4M7.500 4v7M10.500 6v5M13.200 2v9" strokeWidth="1.800" />
              </svg>
            </button>
          </div>
          <ResultsTable />
          <div className="pt-[17px] text-[9px] leading-[15px]">
            <p>Prikazano 1 do 20 od 196 rezultata</p>
            <p>1 <a href="#2" className="text-[#1a7fa5]">2</a> <a href="#3" className="text-[#1a7fa5]">3</a> <Hr text="…" /> <a href="#10" className="text-[#1a7fa5]">10</a> <a href="#next" className="text-[#1a7fa5]">»</a></p>
          </div>
        </div>
        <div className="w-[251px] pt-[78px]">
          <div className="mr-[6px]"><LimitsPanel /></div>
          <a href="#zcgo" className="mt-[51px] ml-[4px] flex h-[56px] items-center rounded-[1px] bg-linear-to-br from-[#289b43] to-[#45b0dd] pl-[19px] text-white">
            <FaWind size={26} />
            <span className="pt-[3px] pl-[24px]">
              <b className="block text-[14px] leading-5"><Hr text="ŽCGO MARIŠĆINA" /></b>
              <span className="block text-[9px] leading-[14px]">olfaktometrijska mjerenja</span>
            </span>
          </a>
        </div>
      </main>

      <div className="pt-[51px]"><Footer /></div>
    </div>
  );
}
